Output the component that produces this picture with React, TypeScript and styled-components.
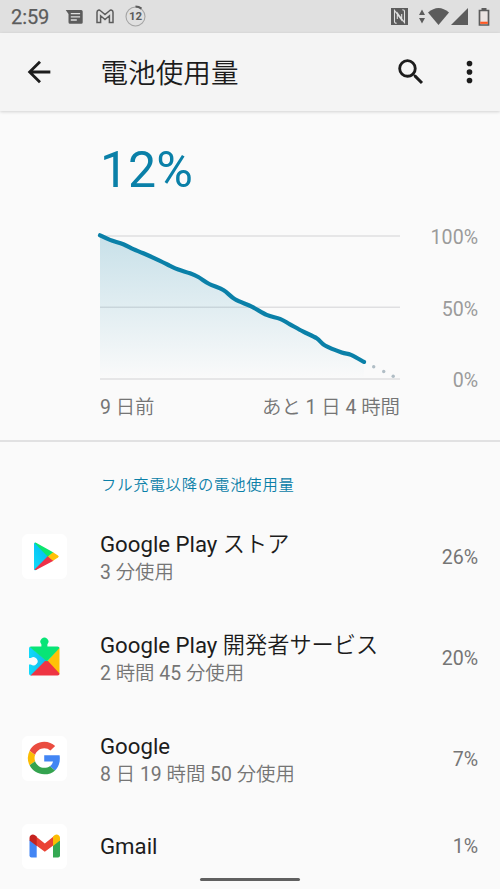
import React from 'react';
import styled, { createGlobalStyle } from 'styled-components';

const GlobalStyle = createGlobalStyle`
  * { box-sizing: border-box; }
  html, body { margin: 0; padding: 0; background: #fafafa; overflow: hidden; }
  body { font-family: Roboto, "Noto Sans CJK JP DemiLight", "Noto Sans CJK JP", sans-serif; }
`;

const Screen = styled.main`
  position: relative;
  width: 500px;
  height: 889px;
  overflow: hidden;
  display: flex;
  flex-direction: column;
  background: #fafafa;
`;

const StatusBar = styled.header`
  flex: none;
  height: 33px;
  display: flex;
  align-items: center;
  justify-content: space-between;
  padding: 0 10px 0 11px;
  background: #e0e0e0;
  color: #5c5c5c;
`;

const StatusGroup = styled.div`
  display: flex;
  align-items: center;
`;

const Clock = styled.span`
  width: 54px;
  font-size: 20px;
  line-height: 33px;
  padding-top: 1px;
  letter-spacing: -0.1px;
  -webkit-text-stroke: 0.25px #5c5c5c;
`;

const Glyph = styled.svg<{ $gap?: number }>`
  display: block;
  flex: none;
  margin-left: ${(p) => p.$gap ?? 0}px;
`;

const AppBar = styled.nav`
  position: relative;
  flex: none;
  height: 78px;
  display: flex;
  align-items: center;
  padding: 0 22px 0 22px;
  background: #f4f4f4;
  box-shadow: 0 1px 3px rgba(0, 0, 0, 0.16);
`;

const BarButton = styled.button<{ $gap?: number }>`
  flex: none;
  margin: 0 0 0 ${(p) => p.$gap ?? 0}px;
  padding: 0;
  border: 0;
  background: none;
`;

const Title = styled.h1`
  flex: 1;
  margin: 0 0 0 44.5px;
  padding-top: 4px;
  font-size: 27.6px;
  font-weight: 400;
  line-height: 40px;
  color: #1c1c1c;
`;

const Summary = styled.section`
  flex: none;
  height: 331px;
  padding: 29px 22px 0 100px;
  border-bottom: 2px solid #e1e1e2;
`;

const Level = styled.div`
  height: 60px;
  font-size: 50px;
  line-height: 60px;
  color: #0a80a8;
`;

const ChartRow = styled.div`
  display: flex;
  justify-content: space-between;
  margin-top: 25px;
`;

const ChartSvg = styled.svg`
  display: block;
  overflow: visible;
`;

const Scale = styled.div`
  height: 168px;
  padding-top: 1px;
  display: flex;
  flex-direction: column;
  justify-content: space-between;
  text-align: right;
  font-size: 19.6px;
  line-height: 24px;
  color: #9b9b9b;
`;

const TimeAxis = styled.div`
  width: 300px;
  padding-top: 1px;
  display: flex;
  justify-content: space-between;
  font-size: 19.4px;
  line-height: 28px;
  color: #757575;
`;

const SectionTitle = styled.h2`
  flex: none;
  margin: 31px 0 9px 101px;
  font-size: 15.3px;
  font-weight: 400;
  line-height: 24px;
  letter-spacing: 0.85px;
  color: #0a80a8;
`;

const AppRow = styled.article<{ $height: number }>`
  flex: none;
  height: ${(p) => p.$height}px;
  display: flex;
  align-items: center;
  padding: 0 22px;
`;

const AppIcon = styled.div<{ $plate: boolean }>`
  flex: none;
  width: 45px;
  height: 45px;
  border-radius: 6px;
  background: ${(p) => (p.$plate ? '#fff' : 'transparent')};
`;

const AppText = styled.div<{ $twoLines: boolean }>`
  flex: 1;
  margin-left: 33px;
  padding-top: ${(p) => (p.$twoLines ? 3 : 0)}px;
`;

const AppName = styled.div`
  font-size: 22.2px;
  line-height: 30px;
  color: #1c1c1c;
`;

const AppUsage = styled.div`
  font-size: 19.4px;
  line-height: 28px;
  color: #757575;
`;

const Percent = styled.span`
  font-size: 19.6px;
  line-height: 24px;
  padding-top: 2px;
  color: #757575;
`;

const HomeHandle = styled.div`
  position: absolute;
  left: 200px;
  bottom: 8px;
  width: 100px;
  height: 3px;
  border-radius: 2px;
  background: #606060;
`;

const levels: [number, number][] = [
  [0, 0], [10, 4.6], [23.3, 8.9], [33.3, 13.9], [43.3, 18], [60, 25.5], [70, 30.5],
  [78.3, 34.2], [90, 38], [98.3, 41.7], [109.3, 48.7], [123.3, 54.7], [135, 64],
  [151.7, 71.3], [166.7, 79.6], [180, 83.6], [190, 89], [203.3, 96.3], [216.7, 103],
  [225, 110.2], [241.7, 117.2], [251, 119.6], [264, 126.6],
];

const curve = levels.reduce((d, [x, y], i) => {
  if (i === 0) return `M${x} ${y}`;
  const p0 = levels[Math.max(0, i - 2)];
  const p1 = levels[i - 1];
  const p3 = levels[Math.min(levels.length - 1, i + 1)];
  const a = [p1[0] + (x - p0[0]) / 6, p1[1] + (y - p0[1]) / 6];
  const b = [x - (p3[0] - p1[0]) / 6, y - (p3[1] - p1[1]) / 6];
  return `${d}C${a[0].toFixed(2)} ${a[1].toFixed(2)} ${b[0].toFixed(2)} ${b[1].toFixed(2)} ${x} ${y}`;
}, '');

const BatteryChart = () => (
  <ChartSvg width="300" height="167" viewBox="0 -10 300 167">
    <defs>
      <linearGradient id="level" x1="0" y1="0" x2="0" y2="144" gradientUnits="userSpaceOnUse">
        <stop offset="0" stopColor="#0a80a8" stopOpacity="0.21" />
        <stop offset="1" stopColor="#0a80a8" stopOpacity="0" />
      </linearGradient>
    </defs>
    <path d="M0 1H300M0 72.200H300M0 144H300" stroke="#dfdfe1" strokeWidth="1.600" />
    <path d={`${curve}V143.500H0Z`} fill="url(#level)" />
    <path d={curve} transform="translate(0 .3)" fill="none" stroke="#0a80a8" strokeWidth="4.200" strokeLinecap="round" strokeLinejoin="round" />
    <g fill="#b0bdc5">
      <circle cx="273.7" cy="131.7" r="1.7" />
      <circle cx="283.7" cy="136.5" r="1.7" />
      <circle cx="293.2" cy="141.2" r="1.7" />
    </g>
  </ChartSvg>
);

const PlayStoreIcon = () => (
  <svg width="45" height="45" viewBox="0 0 45 45">
    <defs>
      <linearGradient id="playBlue" x1="1" y1="0" x2="0" y2="1">
        <stop offset="0" stopColor="#00b4f0" />
        <stop offset="1" stopColor="#12dcfa" />
      </linearGradient>
    </defs>
    <path d="M12 10q0-2 2-1l14 14-14 13q-2 1-2-1Z" fill="url(#playBlue)" />
    <path d="M12.500 9q.7-.8 2 0L31.500 18.500 26 23Z" fill="#0ce56f" />
    <path d="M12.500 35.600 26 22l5.500 4.700-17 9.100q-1.300.7-2-.2Z" fill="#ee3048" />
    <path d="m31 18.200 5 3.200q1.600 1.100 0 2.200l-5 3.200-5-4.400Z" fill="#ffc107" />
  </svg>
);

const PlayServicesIcon = () => (
  <svg width="45" height="45" viewBox="0 0 45 45">
    <defs>
      <clipPath id="puzzle">
        <path d="M9 11.500h10.400V9.300a4 4 0 1 1 6 0v2.200H35.500q2 0 2 2V38.500q0 2-2 2H9q-2 0-2-2V29.500h1.900a4.100 4.100 0 1 0 0-6.400H7V13.500q0-2 2-2Z" />
      </clipPath>
      <linearGradient id="puzzleBlue" x1="0" y1="0" x2="1" y2="0">
        <stop offset="0" stopColor="#10dafa" />
        <stop offset="1" stopColor="#13b5ea" />
      </linearGradient>
    </defs>
    <g clipPath="url(#puzzle)">
      <path d="M7 11v32l18.800-16.500Z" fill="url(#puzzleBlue)" />
      <path d="M38 11.500V42L25 26.500Z" fill="#ffc107" />
      <path d="M7 42 23 26h3L38 39v4H7Z" fill="#ee3442" />
      <path d="m7 11.500 18 15 13-14V0H7Z" fill="#08e476" />
    </g>
  </svg>
);

const GoogleIcon = () => (
  <svg width="45" height="45" viewBox="0 0 45 45">
    <g transform="translate(5.900 5.700) scale(.68)">
      <path fill="#ea4c40" d="M24 9.500c3.540 0 6.710 1.220 9.210 3.600l6.850-6.850C35.900 2.380 30.470 0 24 0 14.620 0 6.510 5.380 2.560 13.220l7.980 6.190C12.430 13.720 17.740 9.500 24 9.500z" />
      <path fill="#4285f4" d="M46.980 24.550c0-1.570-.15-3.090-.38-4.550H24v9.020h12.940c-.58 2.960-2.260 5.480-4.780 7.180l7.730 6c4.510-4.180 7.090-10.360 7.090-17.650z" />
      <path fill="#fbbc05" d="M10.530 28.590a14.500 14.500 0 0 1 0-9.180l-7.980-6.190a23.900 23.900 0 0 0 0 21.560z" />
      <path fill="#34a34f" d="M24 48c6.480 0 11.930-2.130 15.890-5.810l-7.730-6c-2.150 1.450-4.920 2.300-8.160 2.300-6.260 0-11.570-4.220-13.470-9.910l-7.980 6.190C6.510 42.620 14.620 48 24 48z" />
    </g>
  </svg>
);

const GmailIcon = () => (
  <svg width="45" height="45" viewBox="0 0 45 45">
    <path d="M7.500 16v15.500q0 2 2 2h5.200V20Z" fill="#4285f4" />
    <path d="M38 16v15.500q0 2-2 2h-5V20Z" fill="#34a853" />
    <path d="m14 12.600 8.800 6.800 8.700-6.800V21.300l-8.700 6.500-8.800-6.500Z" fill="#ea4335" />
    <path d="M7.500 16.500V14c0-3 3.300-4.500 5.500-2.800l1.700 1.300v9.400Z" fill="#c5221f" />
    <path d="M38 16.500V14c0-3-3.300-4.500-5.500-2.800L31 12.500v9.400Z" fill="#fbbc04" />
  </svg>
);

const apps = [
  { name: 'Google Play ストア', usage: '3 分使用', percent: '26%', Icon: PlayStoreIcon, plate: true, height: 101 },
  { name: 'Google Play 開発者サービス', usage: '2 時間 45 分使用', percent: '20%', Icon: PlayServicesIcon, plate: false, height: 101 },
  { name: 'Google', usage: '8 日 19 時間 50 分使用', percent: '7%', Icon: GoogleIcon, plate: true, height: 101 },
  { name: 'Gmail', usage: '', percent: '1%', Icon: GmailIcon, plate: true, height: 74 },
];

const BadgeText = styled.text`
  font: 700 11.5px Roboto, sans-serif;
`;

export default function App() {
  return (
    <>
      <GlobalStyle />
      <Screen>
        <StatusBar>
          <StatusGroup>
            <Clock>2:59</Clock>
            <Glyph width="19" height="16" viewBox="0 0 19 16">
              <path d="M.7 1h15.500q1.500 0 1.500 1.500v11q0 1.200-1.500 1.200H5q-1.500 0-1.500-1.500V5Z" fill="#5c5c5c" />
              <path d="M5.800 4.600h9.300M5.800 7.800h9.300M5.800 11h6" stroke="#e0e0e0" strokeWidth="1.300" />
            </Glyph>
            <Glyph $gap={12} width="18" height="15" viewBox="0 0 18 15">
              <path d="M1 13.500V3.200C1 1 3.200.5 4.500 1.700L9 5.500l4.500-3.800C14.800.5 17 1 17 3.200v10.300h-3.600V6.800L9 10.500 4.600 6.800v6.700Z" fill="none" stroke="#5c5c5c" strokeWidth="1.500" />
            </Glyph>
            <Glyph $gap={11} width="21" height="23" viewBox="0 0 21 23">
              <circle cx="10.500" cy="11.500" r="9.500" fill="none" stroke="#a5a5a5" strokeWidth="1.100" />
              <path d="M10.500 1.500A10 10 0 0 1 16.500 3.600" fill="none" stroke="#5c5c5c" strokeWidth="2" />
              <BadgeText x="10.500" y="15.400" textAnchor="middle" fill="#5c5c5c">12</BadgeText>
            </Glyph>
          </StatusGroup>
          <StatusGroup>
            <Glyph width="17" height="17" viewBox="0 0 17 17">
              <path d="M0 0h17v17H0Z" fill="#5c5c5c" />
              <path d="M5.700 15.200q-2.200 0-2.200-1.800V2.300L10.700 12V6M11.300 1.800q2.200 0 2.200 1.800v11.100L6.300 5v6" fill="none" stroke="#e0e0e0" strokeWidth="1.100" />
            </Glyph>
            <Glyph $gap={11} width="6" height="15" viewBox="0 0 6 15">
              <path d="M0 6 3 .5 6 6ZM0 9h6l-3 5.500Z" fill="#5c5c5c" />
            </Glyph>
            <Glyph $gap={3} width="21" height="17" viewBox="0 0 21 17">
              <path d="M0 4.500Q10.500-4.500 21 4.500L10.500 17Z" fill="#5c5c5c" />
            </Glyph>
            <Glyph $gap={2} width="17" height="17" viewBox="0 0 17 17">
              <path d="M17 0v17H0Z" fill="#5c5c5c" />
            </Glyph>
            <Glyph $gap={10} width="12" height="18" viewBox="0 0 12 18">
              <path d="M3.500 0h5v2h-5Z" fill="#5c5c5c" />
              <path d="M1.500 2.500h9v14.500h-9Z" fill="#ebe4e2" stroke="#5c5c5c" strokeWidth="1.700" />
              <path d="M2.200 13.700h7.600v2.200H2.200Z" fill="#ff5722" />
            </Glyph>
          </StatusGroup>
        </StatusBar>

        <AppBar>
          <BarButton aria-label="戻る">
            <Glyph width="34" height="34" viewBox="0 0 24 24">
              <path d="M20 11H7.830l5.590-5.590L12 4l-8 8 8 8 1.410-1.410L7.830 13H20v-2z" fill="#1c1c1c" />
            </Glyph>
          </BarButton>
          <Title>電池使用量</Title>
          <BarButton aria-label="検索">
            <Glyph width="34" height="34" viewBox="0 0 24 24">
              <path d="M15.500 14h-.79l-.28-.27A6.470 6.470 0 0 0 16 9.500 6.500 6.500 0 1 0 9.500 16c1.610 0 3.090-.59 4.230-1.570l.27.280v.79l5 4.990L20.490 19l-4.990-5zm-6 0a4.500 4.500 0 1 1 0-9 4.500 4.500 0 0 1 0 9z" fill="#1c1c1c" />
            </Glyph>
          </BarButton>
          <BarButton $gap={33} aria-label="その他">
            <Glyph width="17" height="34" viewBox="6 0 12 24">
              <path d="M12 8a2 2 0 1 0 0-4 2 2 0 0 0 0 4zm0 2a2 2 0 1 0 0 4 2 2 0 0 0 0-4zm0 6a2 2 0 1 0 0 4 2 2 0 0 0 0-4z" fill="#1c1c1c" />
            </Glyph>
          </BarButton>
        </AppBar>

        <Summary>
          <Level>12%</Level>
          <ChartRow>
            <BatteryChart />
            <Scale>
              <span>100%</span>
              <span>50%</span>
              <span>0%</span>
            </Scale>
          </ChartRow>
          <TimeAxis>
            <span>9 日前</span>
            <span>あと 1 日 4 時間</span>
          </TimeAxis>
        </Summary>

        <SectionTitle>フル充電以降の電池使用量</SectionTitle>
        {apps.map(({ name, usage, percent, Icon, plate, height }) => (
          <AppRow key={name} $height={height}>
            <AppIcon $plate={plate}><Icon /></AppIcon>
            <AppText $twoLines={usage !== ''}>
              <AppName>{name}</AppName>
              {usage && <AppUsage>{usage}</AppUsage>}
            </AppText>
            <Percent>{percent}</Percent>
          </AppRow>
        ))}
        <HomeHandle />
      </Screen>
    </>
  );
}
